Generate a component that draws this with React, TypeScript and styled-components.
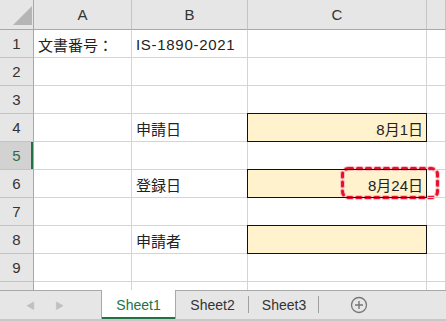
import React from 'react'
import styled, { createGlobalStyle, css } from 'styled-components'

const GlobalStyle = createGlobalStyle`
  html, body {
    margin: 0;
    padding: 0;
    background: #ffffff;
  }
  body {
    font-family: "Liberation Sans", "Noto Sans CJK JP", sans-serif;
  }
`

const Window = styled.div`
  width: 446px;
  height: 321px;
  display: flex;
  flex-direction: column;
  overflow: hidden;
  background: #ffffff;
`

const Sheet = styled.div`
  flex: 1;
  overflow: hidden;
  position: relative;
`

const Grid = styled.div`
  display: grid;
  grid-template-columns: 34px 98px 116px 179px 1fr;
  grid-auto-rows: 28px;
  grid-template-rows: 30px;
`

const HeaderCell = styled.div<{ $corner?: boolean }>`
  background: #e6e6e6;
  border-right: 1px solid #c4c4c4;
  border-bottom: 1px solid #a8a8a8;
  display: flex;
  align-items: center;
  justify-content: center;
  font-size: 15px;
  color: #333;
  position: relative;
  ${({ $corner }) => $corner && css`
    border-right-color: #a8a8a8;
  `}
`

const RowHead = styled.div<{ $active?: boolean }>`
  background: ${({ $active }) => ($active ? '#d2d2d2' : '#e6e6e6')};
  border-right: 1px solid #a8a8a8;
  border-bottom: 1px solid #c4c4c4;
  display: flex;
  align-items: center;
  justify-content: center;
  font-size: 15px;
  color: ${({ $active }) => ($active ? '#2f6b4a' : '#333')};
  ${({ $active }) => $active && css`
    box-shadow: inset -2px 0 0 #217346;
  `}
`

const Cell = styled.div<{ $fill?: boolean; $right?: boolean }>`
  border-right: 1px solid #d4d4d4;
  border-bottom: 1px solid #d4d4d4;
  display: flex;
  align-items: center;
  justify-content: ${({ $right }) => ($right ? 'flex-end' : 'flex-start')};
  padding: 2px 3px 0 4px;
  font-size: 15px;
  color: #222;
  white-space: nowrap;
  position: relative;
  ${({ $fill }) => $fill && css`
    background: #fff2cc;
    &::after {
      content: '';
      position: absolute;
      left: -1px;
      top: -1px;
      right: -1px;
      bottom: -1px;
      border: 1px solid #111;
      pointer-events: none;
    }
  `}
`

const Wide = styled.span`
  letter-spacing: 0.7px;
`

const Callout = styled.svg`
  position: absolute;
  left: 93px;
  top: -3px;
  overflow: visible;
  pointer-events: none;
`

const TabBar = styled.div`
  height: 28px;
  flex: none;
  display: flex;
  align-items: stretch;
  background: #e6e6e6;
  border-top: 1px solid #a8a8a8;
  border-bottom: 2px solid #c8c8c8;
  font-size: 14px;
  color: #333;
`

const Nav = styled.div`
  width: 101px;
  display: flex;
  align-items: center;
  gap: 20px;
  padding-left: 26px;
  box-sizing: border-box;
  color: #c0c0c0;
  font-size: 9px;
`

const Tab = styled.div<{ $active?: boolean; $width?: number }>`
  width: ${({ $width }) => $width ?? 73}px;
  display: flex;
  align-items: center;
  justify-content: center;
  position: relative;
  ${({ $active }) => $active
    ? css`
      background: #ffffff;
      color: #217346;
      margin-top: -1px;
      border-left: 1px solid #a8a8a8;
      border-right: 1px solid #a8a8a8;
      box-shadow: inset 0 -2px 0 #217346;
    `
    : css`
      &::after {
        content: '';
        position: absolute;
        right: 0;
        top: 5px;
        bottom: 6px;
        border-right: 1px solid #a0a0a0;
      }
    `}
`

const AddButton = styled.div`
  width: 80px;
  display: flex;
  align-items: center;
  justify-content: center;
  color: #777;
`

type CellData = { text?: string; latin?: boolean; fill?: boolean; right?: boolean; callout?: boolean }

const rows: CellData[][] = [
  [{ text: '文書番号：' }, { text: 'IS-1890-2021', latin: true }, {}],
  [{}, {}, {}],
  [{}, {}, {}],
  [{}, { text: '申請日' }, { text: '8月1日', fill: true, right: true }],
  [{}, {}, {}],
  [{}, { text: '登録日' }, { text: '8月24日', fill: true, right: true, callout: true }],
  [{}, {}, {}],
  [{}, { text: '申請者' }, { fill: true }],
  [{}, {}, {}],
  [{}, {}, {}],
]

const DashedBox = () => (
  <Callout width="98" height="32" viewBox="0 0 98 32">
    <rect x="1.5" y="1.5" width="95" height="29" rx="6" fill="none" stroke="#f7a8b4" strokeWidth="5" opacity="0.7" strokeDasharray="4 5" strokeLinecap="round" />
    <rect x="1.5" y="1.5" width="95" height="29" rx="6" fill="none" stroke="#e8102c" strokeWidth="3" strokeDasharray="4 5" strokeLinecap="round" />
  </Callout>
)

const App = () => (
  <Window>
    <GlobalStyle />
    <Sheet>
      <Grid>
        <HeaderCell $corner>
          <svg width="34" height="30" style={{ position: 'absolute', left: 0, top: 0 }}>
            <polygon points="13,25 32,25 32,6" fill="#b5b5b5" />
          </svg>
        </HeaderCell>
        <HeaderCell>A</HeaderCell>
        <HeaderCell>B</HeaderCell>
        <HeaderCell>C</HeaderCell>
        <HeaderCell />
        {rows.map((row, i) => (
          <React.Fragment key={i}>
            <RowHead $active={i === 4}>{i + 1}</RowHead>
            {row.map((c, j) => (
              <Cell key={j} $fill={c.fill} $right={c.right}>
                {c.latin ? <Wide>{c.text}</Wide> : c.text}
                {c.callout && <DashedBox />}
              </Cell>
            ))}
            <Cell />
          </React.Fragment>
        ))}
      </Grid>
    </Sheet>
    <TabBar>
      <Nav>
        <span>◀</span>
        <span>▶</span>
      </Nav>
      <Tab $active>Sheet1</Tab>
      <Tab>Sheet2</Tab>
      <Tab $width={70}>Sheet3</Tab>
      <AddButton>
        <svg width="18" height="18" viewBox="0 0 18 18">
          <circle cx="9" cy="9" r="7.5" fill="none" stroke="#777" strokeWidth="1.3" />
          <path d="M9 5v8M5 9h8" stroke="#777" strokeWidth="1.4" />
        </svg>
      </AddButton>
    </TabBar>
  </Window>
)

export default App
